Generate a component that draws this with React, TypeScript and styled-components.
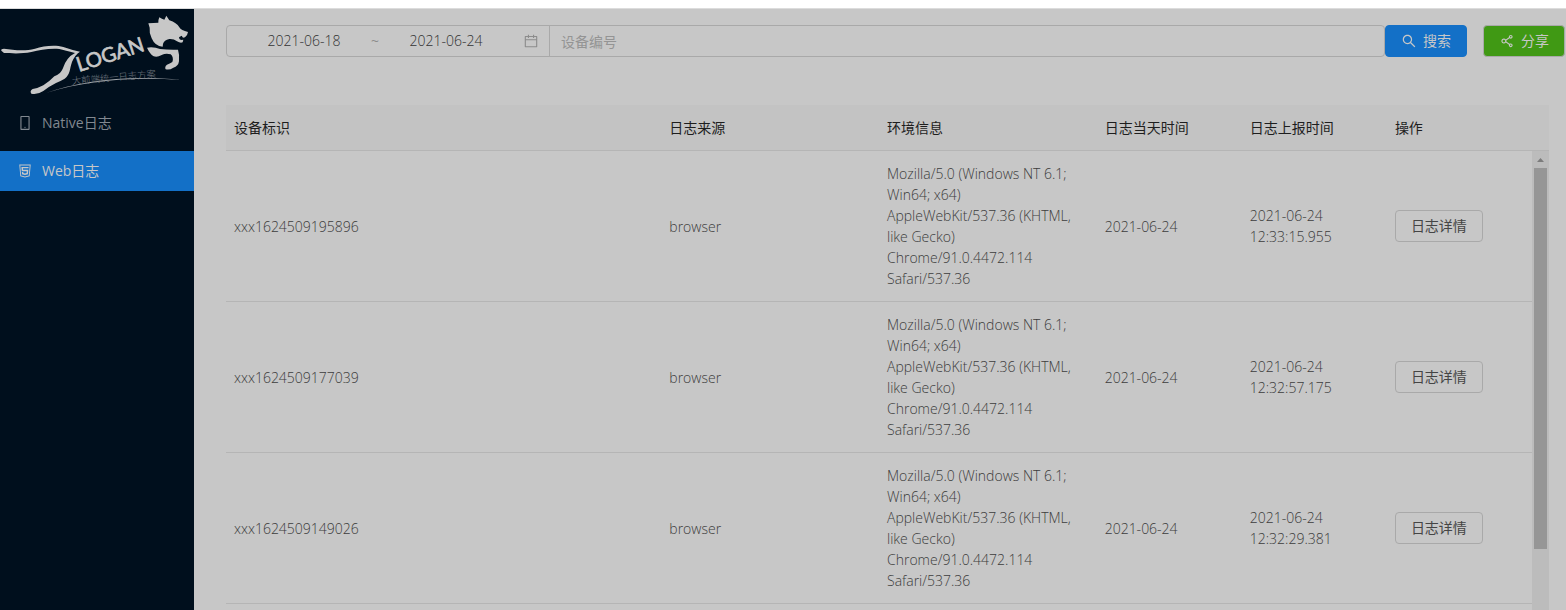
import React from "react";
import styled, { createGlobalStyle } from "styled-components";
import {
  AiOutlineCalendar,
  AiOutlineHtml5,
  AiOutlineMobile,
  AiOutlineSearch,
  AiOutlineShareAlt,
} from "react-icons/ai";

const GlobalStyle = createGlobalStyle`
  * { box-sizing: border-box; }
  body {
    margin: 0;
    background: #fff;
    font-family: "Open Sans", "Noto Sans CJK SC", sans-serif;
    font-size: 14px;
    line-height: 21px;
    color: #3c3c3c;
  }
  input, button { font: inherit; }
`;

const Page = styled.div`
  display: flex;
  flex-direction: column;
  height: 100vh;
  overflow: hidden;
`;

const TopStrip = styled.header`
  flex: none;
  height: 9px;
  background: #fff;
  border-bottom: 1px solid #dcdcdc;
`;

const Body = styled.div`
  flex: 1;
  min-height: 0;
  display: flex;
`;

const Sidebar = styled.aside`
  flex: none;
  width: 194px;
  background: #000f1d;
`;

const Logo = styled.svg`
  display: block;
  width: 100%;
  height: 90px;
  margin-bottom: 4px;
`;

const Menu = styled.nav`
  display: flex;
  flex-direction: column;
  gap: 8px;
`;

const MenuItem = styled.a<{ $active?: boolean }>`
  display: flex;
  align-items: center;
  gap: 9px;
  height: 40px;
  padding: 0 17px 1px;
  text-decoration: none;
  color: ${(p) => (p.$active ? "#c7c7c7" : "#818890")};
  background: ${(p) => (p.$active ? "#1370c7" : "transparent")};
`;

const Main = styled.main`
  flex: 1;
  min-width: 0;
  display: flex;
  flex-direction: column;
  gap: 48px;
  padding: 16px 1px 0 32px;
  background: #c7c7c7;
`;

const Toolbar = styled.form`
  flex: none;
  display: flex;
  height: 32px;
`;

const RangePicker = styled.div`
  display: flex;
  align-items: center;
  width: 324px;
  padding: 0 10px 1px 11px;
  border: 1px solid #a9a9a9;
  border-radius: 4px 0 0 4px;
  color: #8c8c8c;
`;

const DateInput = styled.input`
  flex: 1;
  min-width: 0;
  padding: 0;
  border: 0;
  outline: 0;
  background: transparent;
  text-align: center;
  font-weight: 300;
  color: #333;
`;

const Tilde = styled.span`
  width: 10px;
  text-align: center;
`;

const CalendarIcon = styled(AiOutlineCalendar)`
  margin-left: 11px;
`;

const DeviceInput = styled.input`
  flex: 1;
  min-width: 0;
  margin-left: -1px;
  padding: 0 11px;
  border: 1px solid #a9a9a9;
  border-radius: 0 4px 4px 0;
  outline: 0;
  background: transparent;
  color: #454545;
  &::placeholder { color: #949494; opacity: 1; }
`;

const Button = styled.button<{ $tone?: "primary" | "share" }>`
  display: inline-flex;
  align-items: center;
  gap: 6px;
  height: 32px;
  padding: 0 15px 1px;
  border: 1px solid ${(p) => (p.$tone === "primary" ? "#1370c7" : "#a9a9a9")};
  border-radius: 4px;
  background: ${(p) =>
    p.$tone === "primary" ? "#1370c7" : p.$tone === "share" ? "#409914" : "transparent"};
  color: ${(p) => (p.$tone ? "#c7c7c7" : "#454545")};
  margin-left: ${(p) => (p.$tone === "share" ? "16px" : "0")};
  white-space: nowrap;
`;

const TableArea = styled.section`
  position: relative;
  flex: 1;
  min-height: 0;
  margin-right: 16px;
`;

const Table = styled.table`
  display: block;
  text-align: left;

  thead, tbody { display: block; padding-right: 17px; }
  thead { background: #c3c3c3; border-bottom: 1px solid #b5b5b5; }
  tr { display: grid; grid-template-columns: 6fr 3fr 3fr 2fr 2fr 2fr; align-items: center; }
  tbody tr { border-bottom: 1px solid #b5b5b5; }
`;

const HeadCell = styled.th`
  padding: 12px 8px;
  font-weight: 400;
  color: #1e1e1e;
`;

const Cell = styled.td`
  padding: 12px 8px;
  font-weight: 300;
`;

const ActionCell = styled(Cell)`
  font-weight: 400;
`;

const ScrollTrack = styled.div`
  position: absolute;
  top: 46px;
  right: 0;
  bottom: 0;
  width: 17px;
  display: flex;
  flex-direction: column;
  align-items: center;
  background: #bcbcbc;
`;

const ScrollArrow = styled.svg`
  flex: none;
  width: 17px;
  height: 17px;
`;

const ScrollThumb = styled.div`
  width: 13px;
  height: 83%;
  background: #969696;
`;

const columns = ["设备标识", "日志来源", "环境信息", "日志当天时间", "日志上报时间", "操作"];

const agent =
  "Mozilla/5.0 (Windows NT 6.1; Win64; x64) AppleWebKit/537.36 (KHTML, like Gecko) Chrome/91.0.4472.114 Safari/537.36";

const logs = [
  { id: "xxx1624509195896", day: "2021-06-24", reported: "2021-06-24 12:33:15.955" },
  { id: "xxx1624509177039", day: "2021-06-24", reported: "2021-06-24 12:32:57.175" },
  { id: "xxx1624509149026", day: "2021-06-24", reported: "2021-06-24 12:32:29.381" },
];

function LoganLogo() {
  return (
    <Logo viewBox="0 27 582 270" role="img" aria-label="Logan" fill="#c7c7c7">
      {/* back, tail and hind leg */}
      <path d="M4 152 Q2 146 12 146 C40 150 75 154 105 146 C130 138 165 134 190 141 Q215 150 240 155 Q225 164 216 186 C208 208 212 222 194 236 Q182 243 168 249 Q146 260 130 273 Q112 285 94 281 Q88 273 98 267 Q116 264 130 256 Q150 243 163 229 C178 223 184 217 190 202 Q200 172 225 159 Q195 151 178 147 C145 145 120 150 94 156 C65 162 35 160 12 159 Z" />
      {/* head */}
      <path d="M445 70 Q461 69 475 68 Q475 58 478 52 Q486 58 493 59 L499 47 Q505 56 508 61 Q530 68 538 82 Q543 91 564 96 Q563 105 555 112 L549 113 L545 107 L537 112 Q537 119 543 120 L550 119 L548 127 Q541 130 531 124 Q521 116 508 117 Q492 120 489 132 L488 140 Q465 139 455 115 Q447 98 449 83 Z" />
      {/* front leg */}
      <path d="M441 143 Q462 140 480 147 Q505 150 534 149 Q539 164 537 184 Q535 199 520 203 Q509 211 497 208 Q493 200 501 194 Q512 190 517 186 Q522 172 512 163 Q498 158 485 165 Q472 173 461 169 Q449 161 441 143 Z" />
      {/* ground line */}
      <path d="M138 279 C240 242 390 224 543 240 C400 230 260 241 138 279 Z" fill="#a3a8ad" />
      <text
        x="237"
        y="216"
        fontFamily="Lato, sans-serif"
        fontSize="61"
        fontWeight="400"
        stroke="#c7c7c7"
        strokeWidth="2"
        transform="rotate(-18 237 216)"
      >
        LOGAN
      </text>
      <text x="217" y="253" fontSize="28" fontWeight="300" fill="#727980" transform="rotate(-5 217 253)">
        大前端统一日志方案
      </text>
    </Logo>
  );
}

export default function App() {
  return (
    <Page>
      <GlobalStyle />
      <TopStrip />
      <Body>
        <Sidebar>
          <LoganLogo />
          <Menu>
            <MenuItem href="#native">
              <AiOutlineMobile size={16} />
              Native日志
            </MenuItem>
            <MenuItem href="#web" $active aria-current="page">
              <AiOutlineHtml5 size={16} />
              Web日志
            </MenuItem>
          </Menu>
        </Sidebar>
        <Main>
          <Toolbar onSubmit={(e) => e.preventDefault()}>
            <RangePicker>
              <DateInput aria-label="开始日期" defaultValue="2021-06-18" />
              <Tilde>~</Tilde>
              <DateInput aria-label="结束日期" defaultValue="2021-06-24" />
              <CalendarIcon size={16} />
            </RangePicker>
            <DeviceInput aria-label="设备编号" placeholder="设备编号" />
            <Button type="submit" $tone="primary">
              <AiOutlineSearch size={16} />
              搜索
            </Button>
            <Button type="button" $tone="share">
              <AiOutlineShareAlt size={16} />
              分享
            </Button>
          </Toolbar>
          <TableArea>
            <Table>
              <thead>
                <tr>
                  {columns.map((name) => (
                    <HeadCell key={name} scope="col">{name}</HeadCell>
                  ))}
                </tr>
              </thead>
              <tbody>
                {logs.map((log) => (
                  <tr key={log.id}>
                    <Cell>{log.id}</Cell>
                    <Cell>browser</Cell>
                    <Cell>{agent}</Cell>
                    <Cell>{log.day}</Cell>
                    <Cell>{log.reported}</Cell>
                    <ActionCell>
                      <Button type="button">日志详情</Button>
                    </ActionCell>
                  </tr>
                ))}
              </tbody>
            </Table>
            <ScrollTrack aria-hidden="true">
              <ScrollArrow viewBox="0 0 17 17">
                <path d="M5 11 L8.500 7 L12 11 Z" fill="#7c7c7c" />
              </ScrollArrow>
              <ScrollThumb />
            </ScrollTrack>
          </TableArea>
        </Main>
      </Body>
    </Page>
  );
}
